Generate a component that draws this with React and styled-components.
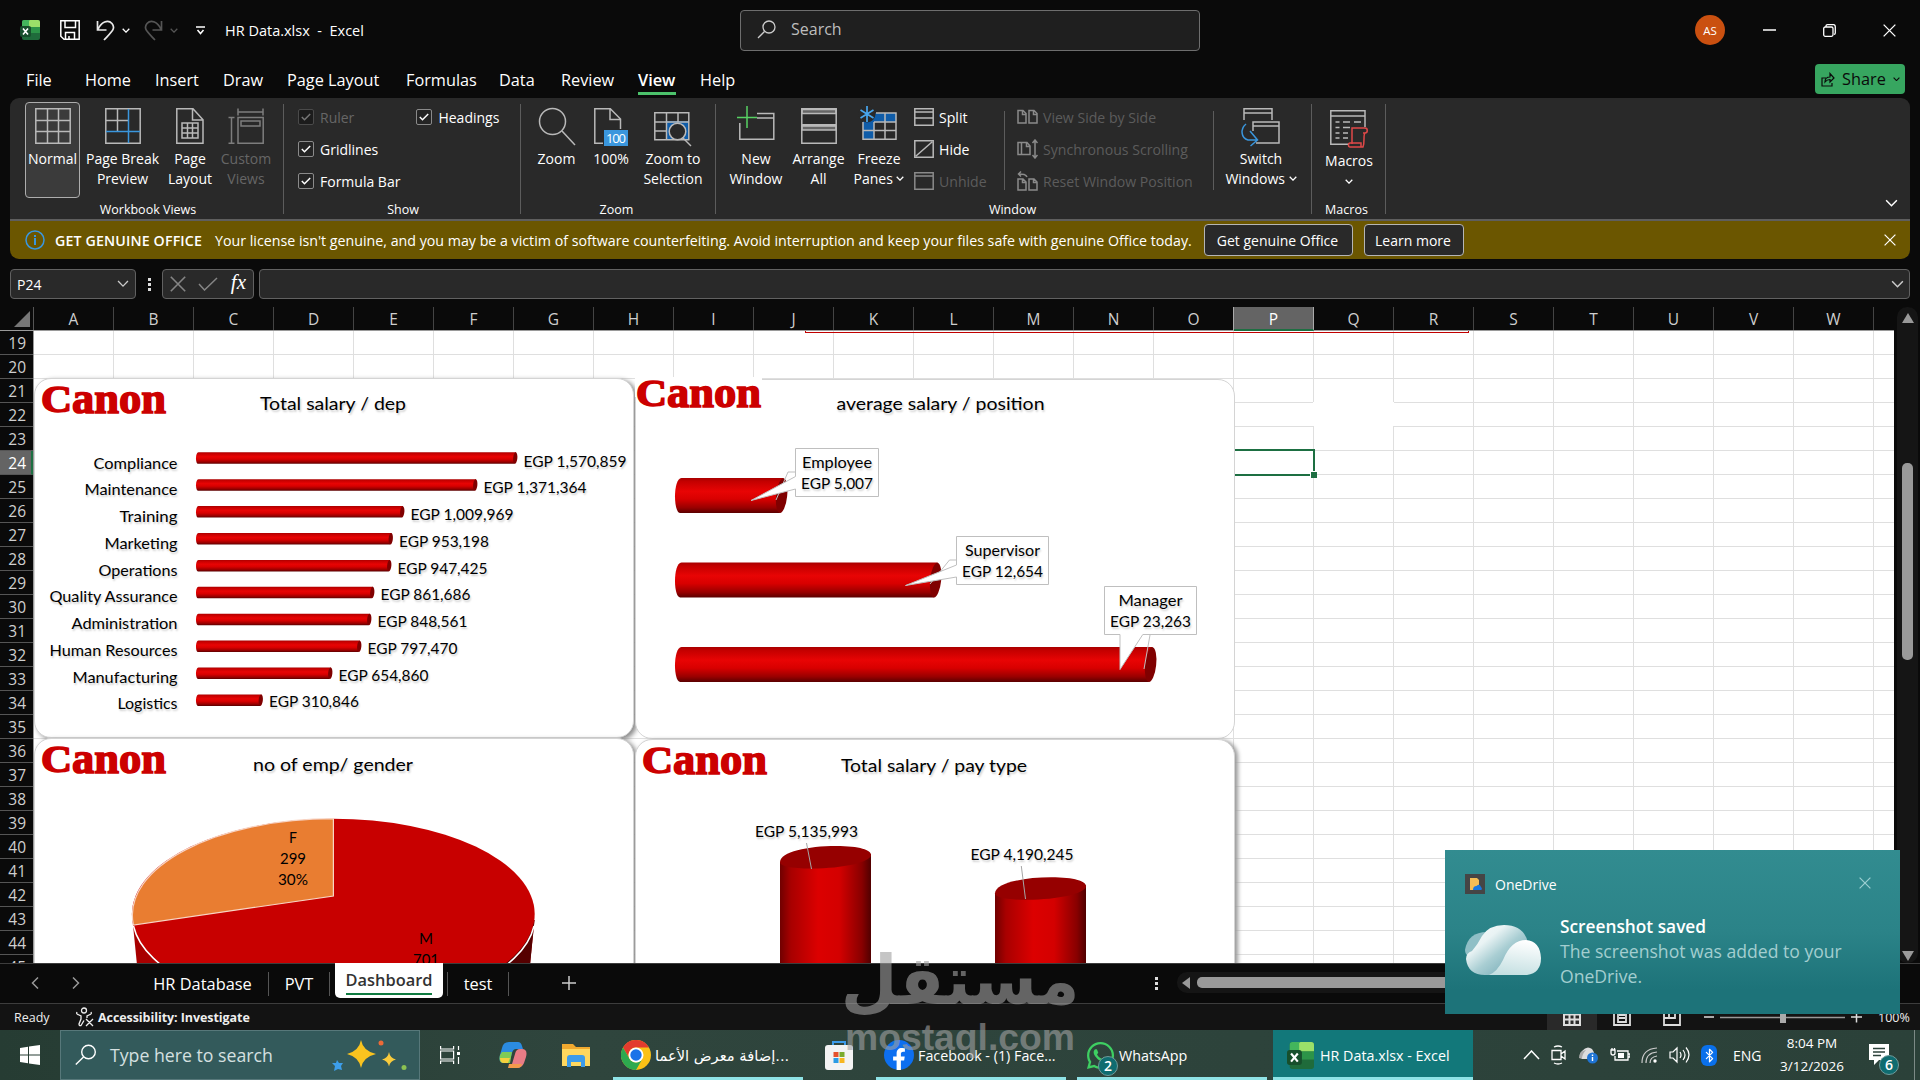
import React from "react";
import styled, { createGlobalStyle, css } from "styled-components";
import { FaWhatsapp, FaFacebookF } from "react-icons/fa";
import { Bluetooth } from "lucide-react";

const COLUMNS = "ABCDEFGHIJKLMNOPQRSTUVW".split("");
const ROWS = Array.from({ length: 27 }, (_, i) => i + 19);
const MENU = [
  ["File", 26, 33],
  ["Home", 46, 24],
  ["Insert", 43, 25],
  ["Draw", 39, 25],
  ["Page Layout", 93, 26],
  ["Formulas", 69, 24],
  ["Data", 36, 26],
  ["Review", 53, 24],
  ["View", 38, 24],
  ["Help", 36, 0],
];

const DEPARTMENTS = [
  ["Compliance", 84, 517.5, "EGP 1,570,859"],
  ["Maintenance", 93, 477.5, "EGP 1,371,364"],
  ["Training", 58, 404.5, "EGP 1,009,969"],
  ["Marketing", 73, 393, "EGP 953,198"],
  ["Operations", 79, 391.5, "EGP 947,425"],
  ["Quality Assurance", 128, 374.5, "EGP 861,686"],
  ["Administration", 106, 371.5, "EGP 848,561"],
  ["Human Resources", 128, 361.5, "EGP 797,470"],
  ["Manufacturing", 105, 332.5, "EGP 654,860"],
  ["Logistics", 60, 263, "EGP 310,846"],
];

const Svg = ({ w, h, children, ...rest }) => (
  <svg width={w} height={h} viewBox={`0 0 ${w} ${h}`} fill="none" stroke="#b9b9b9" strokeWidth="1.5" {...rest}>
    {children}
  </svg>
);

const Chevron = ({ size = 8, color = "#fff" }) => (
  <Svg w={size} h={size * 0.625} viewBox="0 0 8 5" stroke={color} strokeWidth={size > 9 ? 0.9 : 1.3}>
    <path d="M.7.7 4 4.1 7.3.7" />
  </Svg>
);

const Cross = ({ size = 12, color = "#fff" }) => (
  <Svg w={size} h={size} viewBox="0 0 12 12" stroke={color} strokeWidth="1.2">
    <path d="M.6.6l10.8 10.8M11.4.6.6 11.4" />
  </Svg>
);

const ExcelIcon = ({ size = 20 }) => (
  <Svg w={size} h={size} viewBox="0 0 20 20" stroke="none">
    <path d="M4 0h14a2 2 0 0 1 2 2v16a2 2 0 0 1-2 2H4a2 2 0 0 1-2-2V2a2 2 0 0 1 2-2z" fill="#1f6b3b" />
    <path d="M4 0h7v7H2V2a2 2 0 0 1 2-2z" fill="#43b55c" />
    <path d="M10 0h8a2 2 0 0 1 2 2v5H9V1z" fill="#9be069" />
    <path d="M11 7h9v6h-9z" fill="#2c9448" />
    <rect y="6" width="11" height="11" rx="2" fill="#174f2c" />
    <path d="m3 8.5 5 6M8 8.5l-5 6" stroke="#fff" strokeWidth="1.6" />
  </Svg>
);

/* ribbon icons */

const NormalIcon = () => (
  <Svg w={36} h={36}>
    <path d="M.8.8h34.4v34.4H.8zM12.5 1v34M23.5 1v34M1 12.5h34M1 23.5h34" />
  </Svg>
);

const PageBreakIcon = () => (
  <Svg w={36} h={36}>
    <path d="M.8.8h34.4v34.4H.8zM12.5 1v22M1 12.5h22" />
    <path d="M23.5 1v34M1 23.5h34" stroke="#3a96dd" />
  </Svg>
);

const PageLayoutIcon = () => (
  <Svg w={28} h={36}>
    <path d="M.8.8H17l10 11v23.4H.8zM16.5 1v11H27M6 15h16v15H6zM11.5 15v15M16.5 15v15M6 20h16M6 25h16" />
  </Svg>
);

const CustomViewsIcon = () => (
  <Svg w={36} h={36} stroke="#7d7d7d">
    <path d="M10 .5v7M35 .5v7M10 4h25M.5 9.500h6M3.500 10v25M.5 35.200h6M10 9.500h25.200v25.700H10zM13 13h19v5H13z" />
  </Svg>
);

const ZoomIcon = () => (
  <Svg w={38} h={38}>
    <circle cx="14.500" cy="13.500" r="13" />
    <path d="m24 23 13 14" />
  </Svg>
);

const HundredIcon = () => (
  <Svg w={34} h={38}>
    <path d="M9 35.200H.8V.8h15.500L26.500 11v10M16 1v10.500h10.500" />
    <rect x="10" y="22" width="24" height="16" fill="#3a96dd" stroke="none" />
    <text x="22" y="35" fontSize="13" fontFamily="Open Sans" textAnchor="middle" fill="#fff" stroke="none" textLength="20">
      100
    </text>
  </Svg>
);

const ZoomSelectionIcon = () => (
  <Svg w={38} h={38}>
    <rect x="12" y="13" width="23" height="19" fill="#0f5ca8" stroke="none" />
    <path d="M.8 4.800h34v27H.8zM12.500 5v27M24 5v9M1 14h34M1 23h12" />
    <circle cx="23.500" cy="23.500" r="8.300" fill="#292929" />
    <path d="m29 30 8 8" />
  </Svg>
);

const NewWindowIcon = () => (
  <Svg w={38} h={36}>
    <path d="M2.800 15v16.200h34V5.500H20M20 10h17" />
    <path d="M10 -2v22M0 9.500h20" stroke="#57d163" />
  </Svg>
);

const ArrangeIcon = () => (
  <Svg w={36} h={36}>
    <path d="M1 1.500h34v4H1zM1 18h34v4H1z" fill="#666" />
    <path d="M.8.8h34.400v16H.8zM.8 17.500h34.400v17.700H.8z" />
  </Svg>
);

const FreezeIcon = () => (
  <Svg w={38} h={36}>
    <path d="M3 5h33v9H14v17H3z" fill="#0f5ca8" stroke="none" />
    <path d="M3 14v17.200h33V14M14 14v17M25 14v17M3 22.500h33M14 14h22M25 5v9M16 5h20v9" />
    <circle cx="7" cy="6" r="8.500" fill="#292929" stroke="none" />
    <path d="M7-2v16M.5 2l13 8M13.500 2l-13 8" stroke="#48a6ee" strokeWidth="1.700" />
  </Svg>
);

const SwitchIcon = () => (
  <Svg w={40} h={38}>
    <path d="M3 12V.8h28V12M3 5h28M12 23V14h26v21H15M12 18h26" />
    <path d="M5 16c-6 5-5 14 2 16h9M9 23l7.500 9-7 6" stroke="#3a96dd" />
  </Svg>
);

const MacrosIcon = () => (
  <Svg w={38} h={38}>
    <path d="M35 17V.8H.8v33.400H19M1 6h34M5.500 12h4M13 12h7M24 12h7M5.500 17.500h4M13 17.500h7M5.500 23h4M13 23h5M5.500 28h4M13 28h5" />
    <path d="M22 34V18h13c3 0 3 5 0 5h-2M35 23c-2 2 0 9-2 14H20c-2 0-2-4 0-4h11v4" stroke="#e04848" />
  </Svg>
);

const SplitIcon = () => (
  <Svg w={20} h={18}>
    <path d="M.8.8h18.400v16.400H.8zM1 4h18M1 10h18" />
  </Svg>
);

const HideIcon = () => (
  <Svg w={20} h={18}>
    <path d="M.8.8h18.400v16.400H.8zM2 16 18 2" />
  </Svg>
);

const UnhideIcon = () => (
  <Svg w={20} h={18} stroke="#8a8a8a">
    <path d="M.8.8h18.400v16.400H.8zM1 4h18" />
  </Svg>
);

const SideBySideIcon = () => (
  <Svg w={21} h={16} stroke="#8a8a8a">
    <path d="M9 14H1V1.500h5L9 4.500zM5.500 2v3.500H9M12 14V1.500h5l3 3V14zM16.500 2v3.500H20" />
  </Svg>
);

const SyncIcon = () => (
  <Svg w={21} h={20} stroke="#8a8a8a">
    <path d="M4 15.500H1v-12h3M4.500 3.500H10L13 7v8.500H4.500zM9.500 4v3.500H13M18 1v18M15.500 4 18 1l2.500 3M15.500 16l2.500 3 2.500-3" />
  </Svg>
);

const ResetIcon = () => (
  <Svg w={21} h={20} stroke="#8a8a8a">
    <path d="M9 19H1V8h5l3 3zM12 19V8h5l3 3v8zM5.500 8v3.500H9M16.500 8v3.500H20M4 .5 1.500 3 4 5.500M2 3c4 0 7 0 8 3" />
  </Svg>
);

/* charts */

const Fit = ({ w, size = 15, anchor = "middle", children, ...rest }) => (
  <text fontSize={size} textAnchor={anchor} textLength={w} lengthAdjust="spacingAndGlyphs" {...rest}>
    {children}
  </text>
);

const CanonLogo = ({ x, y }) => (
  <g fill="#cc0000" stroke="#cc0000" strokeWidth="1.6" fontFamily="Liberation Serif" fontWeight="700">
    <text x={x - 1} y={y + 25} fontSize="38" textLength="31" lengthAdjust="spacingAndGlyphs">
      C
    </text>
    <text x={x + 30} y={y + 25.500} fontSize="45" textLength="94" lengthAdjust="spacingAndGlyphs">
      anon
    </text>
  </g>
);

const Gradients = () => (
  <defs>
    <linearGradient id="barFill" x1="0" x2="0" y1="0" y2="1">
      <stop offset="0" stopColor="#a80000" />
      <stop offset=".1" stopColor="#c40000" />
      <stop offset=".38" stopColor="#e80404" />
      <stop offset=".6" stopColor="#d80000" />
      <stop offset=".85" stopColor="#980000" />
      <stop offset="1" stopColor="#5a0000" />
    </linearGradient>
    <linearGradient id="columnFill">
      <stop offset="0" stopColor="#700000" />
      <stop offset=".12" stopColor="#a80000" />
      <stop offset=".42" stopColor="#dc0000" />
      <stop offset=".65" stopColor="#d40000" />
      <stop offset=".9" stopColor="#880000" />
      <stop offset="1" stopColor="#500000" />
    </linearGradient>
  </defs>
);

const HBar = ({ x, y, end, h, cap }) => (
  <g>
    <path
      d={`M${x + cap} ${y}H${end - cap * 0.6}V${y + h / 2}L${end - cap * 1.2} ${y + h}H${x + cap * 0.8}C${x - cap * 0.3} ${y + h} ${x - cap * 0.3} ${y} ${x + cap} ${y}z`}
      fill="url(#barFill)"
    />
    <ellipse
      cx={end - cap * 0.9}
      cy={y + h / 2}
      rx={cap * 0.85}
      ry={h / 2}
      fill="#800000"
      transform={`rotate(${cap > 4 ? 6 : 5} ${end - cap} ${y + h / 2})`}
    />
  </g>
);

const DepartmentChart = () => (
  <Card x={0} y={47}>
    <svg viewBox="34 378 600 360">
      <Gradients />
      <CanonLogo x={42} y={387} />
      <Fit x={333} y={410} w={146} size={18}>
        Total salary / dep
      </Fit>
      {DEPARTMENTS.map(([name, w, end, value], i) => {
        const y = 452.3 + i * 26.9;
        const base = 467 + i * 26.75;
        return (
          <g key={name}>
            <Fit x={177.5} y={base + 1.7} w={w} anchor="end">
              {name}
            </Fit>
            <HBar x={196} y={y} end={end} h={11.500} cap={2.500} />
            <Fit x={end + 6} y={base - 0.3} w={i < 3 ? 103 : 90} anchor="start">
              {value}
            </Fit>
          </g>
        );
      })}
    </svg>
  </Card>
);

const PositionChart = () => (
  <Card x={601} y={48} $light>
    <svg viewBox="635 379 600 360">
      <path d="M635 377h127v20H635z" fill="#fff" />
      <CanonLogo x={637} y={381} />
      <Fit x={940.500} y={410} w={208} size={18}>
        average salary / position
      </Fit>
      <HBar x={675} y={478} end={787.5} h={35} cap={6.500} />
      <HBar x={675} y={562.500} end={941.5} h={35} cap={6.500} />
      <HBar x={675} y={647} end={1156.5} h={35} cap={6.500} />
      <g fill="#fff" stroke="#bfbfbf">
        <path d="M795.500 472H788l-12 28M956.500 560H949.500L930 584M1150 635l-6 34" fill="none" />
        <path d="M795.500 448.500h83v48h-83V489L751 500.500l44.500-24z" />
        <path d="M956.500 536.500h92v48h-92V577l-51 8.500 51-20.500z" />
        <path d="M1104.500 586.500h92v48h-53.700L1120 669.500v-35h-15.500z" />
      </g>
      <Fit x={837} y={467.500} w={70}>Employee</Fit>
      <Fit x={837} y={489} w={72}>EGP 5,007</Fit>
      <Fit x={1002.500} y={555.500} w={75}>Supervisor</Fit>
      <Fit x={1002.500} y={577} w={81}>EGP 12,654</Fit>
      <Fit x={1150.500} y={605.500} w={64}>Manager</Fit>
      <Fit x={1150.500} y={627} w={81}>EGP 23,263</Fit>
    </svg>
  </Card>
);

const GenderChart = () => (
  <Card x={0} y={407}>
    <svg viewBox="34 738 600 360">
      <CanonLogo x={42} y={747} />
      <Fit x={333} y={770.5} w={160} size={18}>
        no of emp/ gender
      </Fit>
      <path d="M132.500 920l5 50h392l5-50z" fill="#a80000" />
      <path d="M500 920h34.500l-5 50H500z" fill="#560000" />
      <ellipse cx="333.300" cy="914" rx="201.400" ry="95.300" fill="#c80000" />
      <path d="M133.400 925c-12-58 83-106.300 200-106.300V896z" fill="#e97d31" stroke="#f8d5c4" strokeWidth="1.200" />
      <path d="M133.500 926A201.400 95.300 0 0 0 534 926" fill="none" stroke="#fff" strokeWidth="1.500" />
      <PlainText>
        <Fit x={293} y={842.500} w={8}>F</Fit>
        <Fit x={293} y={864} w={26}>299</Fit>
        <Fit x={293} y={885} w={30}>30%</Fit>
        <Fit x={426} y={944} w={14}>M</Fit>
        <Fit x={426} y={965} w={26}>701</Fit>
      </PlainText>
    </svg>
  </Card>
);

const Cylinder = ({ dx, dy }) => (
  <g transform={`translate(${dx} ${dy})`}>
    <path d="M780 862v150h91V854z" fill="url(#columnFill)" />
    <path d="M780 862C780 852 808 846 836 846C860 846 871 850 871 855C871 862 843 868.500 812 868.500C790 868.500 780 866 780 862z" fill="#960000" />
  </g>
);

const PayTypeChart = () => (
  <Card x={601} y={408} $strong>
    <svg viewBox="635 739 600 360">
      <CanonLogo x={643} y={748} />
      <Fit x={934} y={771.5} w={186} size={18}>
        Total salary / pay type
      </Fit>
      <Cylinder dx={0} dy={0} />
      <Cylinder dx={215} dy={31.300} />
      <path d="M806.500 843l5 26M1021.300 866l4.200 33" stroke="#a6a6a6" />
      <Fit x={806.500} y={837} w={103}>EGP 5,135,993</Fit>
      <Fit x={1022} y={860} w={103}>EGP 4,190,245</Fit>
    </svg>
  </Card>
);

/* page parts */

const TitleRow = () => (
  <TitleBar>
    <ExcelIcon />
    <SaveSlot>
      <Svg w={20} h={20} stroke="#fff">
        <path d="M.8.8h18.400v18.400H4l-3.200-3zM5 1v6.500h10.500V1M5.500 19v-6.500h9V19M9 19v-3" />
      </Svg>
    </SaveSlot>
    <Svg w={19} h={21} stroke="#e8e8e8" strokeWidth="1.700">
      <path d="M1.500 1v9h9M2 9.500C5 2 12-1 16 3.500c4 5 0 8-8 16.500" />
    </Svg>
    <Chevron />
    <RedoSlot>
      <Svg w={19} h={21} stroke="#555" strokeWidth="1.700">
        <path d="M17.500 1v9h-9M17 9.500C14 2 7-1 3 3.500c-4 5 0 8 8 16.500" />
      </Svg>
      <Chevron color="#555" />
    </RedoSlot>
    <Svg w={9} h={9} stroke="#fff">
      <path d="M0 1h9M1.500 4 4.500 7.500 7.500 4" />
    </Svg>
    <DocTitle>{"HR Data.xlsx  -  Excel"}</DocTitle>
    <SearchBox>
      <Svg w={19} h={19} stroke="#ccc" strokeWidth="1.300">
        <circle cx="12" cy="7" r="6" />
        <path d="M7.500 11.500 1 18" />
      </Svg>
      Search
    </SearchBox>
    <Avatar>AS</Avatar>
    <WindowButtons>
      <Svg w={13} h={2} stroke="#fff">
        <path d="M0 1h13" />
      </Svg>
      <Svg w={13} h={13} stroke="#fff" strokeWidth="1.300">
        <path d="M3 3V2Q3 .7 4.500.7h6Q12.300.7 12.300 3v6q0 1.300-1.300 1.300" />
        <rect x=".7" y="3" width="9.300" height="9.300" rx="1.500" />
      </Svg>
      <Cross size={13} />
    </WindowButtons>
  </TitleBar>
);

const RibbonButton = ({ icon, lines, w, arrow, ...rest }) => (
  <BigButton $w={w} {...rest}>
    <IconBox>{icon}</IconBox>
    {lines.map((line, i) => (
      <span key={line}>
        {line}
        {arrow && i === lines.length - 1 && (
          <>
            {" "}
            <Chevron />
          </>
        )}
      </span>
    ))}
  </BigButton>
);

const Check = ({ label, $off }) => (
  <CheckLabel $off={$off}>
    <CheckBox $off={$off}>
      <Svg w={10} h={8} stroke={$off ? "#777" : "#fff"}>
        <path d="M.8 4 3.500 6.700 9.200 1" />
      </Svg>
    </CheckBox>
    {label}
  </CheckLabel>
);

const Ribbon = () => (
  <RibbonPanel>
    <Group $w={274} $pad={15}>
      <Body $gap={4}>
        <RibbonButton $active w={55} icon={<NormalIcon />} lines={["Normal"]} />
        <RibbonButton w={77} icon={<PageBreakIcon />} lines={["Page Break", "Preview"]} />
        <RibbonButton w={50} icon={<PageLayoutIcon />} lines={["Page", "Layout"]} />
        <RibbonButton $off w={54} icon={<CustomViewsIcon />} lines={["Custom", "Views"]} />
      </Body>
      <GroupName>Workbook Views</GroupName>
    </Group>
    <Group $w={237} $pad={14}>
      <Body $gap={44}>
        <CheckColumn>
          <Check label="Ruler" $off />
          <Check label="Gridlines" />
          <Check label="Formula Bar" />
        </CheckColumn>
        <CheckColumn>
          <NudgeLeft>
            <Check label="Headings" />
          </NudgeLeft>
        </CheckColumn>
      </Body>
      <GroupName>Show</GroupName>
    </Group>
    <Group $w={195} $pad={9}>
      <Body $gap={3}>
        <RibbonButton w={53} icon={<ZoomIcon />} lines={["Zoom"]} />
        <RibbonButton w={50} icon={<HundredIcon />} lines={["100%"]} />
        <RibbonButton w={68} icon={<ZoomSelectionIcon />} lines={["Zoom to", "Selection"]} />
      </Body>
      <GroupName>Zoom</GroupName>
    </Group>
    <Group $w={596} $pad={10}>
      <Body $gap={3}>
        <RibbonButton w={60} icon={<NewWindowIcon />} lines={["New", "Window"]} />
        <RibbonButton w={59} icon={<ArrangeIcon />} lines={["Arrange", "All"]} />
        <RibbonButton arrow w={56} icon={<FreezeIcon />} lines={["Freeze", "Panes"]} />
        <ItemColumn $w={95}>
          <Item><SplitIcon />Split</Item>
          <Item><HideIcon />Hide</Item>
          <Item $off><UnhideIcon />Unhide</Item>
        </ItemColumn>
        <ItemColumn $w={209} $line>
          <Item $off><SideBySideIcon />View Side by Side</Item>
          <Item $off><SyncIcon />Synchronous Scrolling</Item>
          <Item $off><ResetIcon />Reset Window Position</Item>
        </ItemColumn>
        <ItemColumn $w={85} $line $tight>
          <RibbonButton arrow w={80} icon={<SwitchIcon />} lines={["Switch", "Windows"]} />
        </ItemColumn>
      </Body>
      <GroupName>Window</GroupName>
    </Group>
    <Group $w={74} $pad={8}>
      <Body>
        <RibbonButton $low w={58} icon={<MacrosIcon />} lines={["Macros"]} />
      </Body>
      <MacroArrow>
        <Chevron />
      </MacroArrow>
      <GroupName>Macros</GroupName>
    </Group>
    <Collapse>
      <Chevron size={13} />
    </Collapse>
  </RibbonPanel>
);

const Banner = () => (
  <Notice>
    <Svg w={20} h={20} stroke="#3a96dd">
      <circle cx="10" cy="10" r="9" />
      <path d="M10 8v7M10 5v2" strokeWidth="2" />
    </Svg>
    <strong>GET GENUINE OFFICE</strong>
    <p>
      Your license isn't genuine, and you may be a victim of software counterfeiting. Avoid interruption and keep your
      files safe with genuine Office today.
    </p>
    <NoticeButton $w={149}>Get genuine Office</NoticeButton>
    <NoticeButton $w={100}>Learn more</NoticeButton>
    <Cross />
  </Notice>
);

const FormulaBar = () => (
  <FormulaRow>
    <NameBox>
      P24 <Chevron size={12} color="#ccc" />
    </NameBox>
    <Dots />
    <FxBox>
      <Cross size={16} color="#858585" />
      <Svg w={20} h={14} stroke="#858585">
        <path d="m1 7 5.500 6L19 1" />
      </Svg>
      <i>fx</i>
    </FxBox>
    <FormulaInput>
      <Chevron size={13} color="#ccc" />
    </FormulaInput>
  </FormulaRow>
);

const Sheet = () => (
  <SheetArea>
    <HeaderRow>
      <Corner>
        <Svg w={16} h={16} stroke="none">
          <path d="M16 0v16H0z" fill="#777" />
        </Svg>
      </Corner>
      {COLUMNS.map((c) => (
        <ColumnHead key={c} $on={c === "P"}>
          {c}
        </ColumnHead>
      ))}
    </HeaderRow>
    <SheetBody>
      <RowHeads>
        {ROWS.map((r) => (
          <RowHead key={r} $on={r === 24}>
            {r}
          </RowHead>
        ))}
      </RowHeads>
      <Cells>
        <Blank />
        <RedEdge />
        <Selection />
        <DepartmentChart />
        <PositionChart />
        <GenderChart />
        <PayTypeChart />
      </Cells>
      <VScroll>
        <Svg w={12} h={10} stroke="none">
          <path d="M6 0l6 10H0z" fill="#999" />
        </Svg>
        <VThumb />
        <Svg w={12} h={10} stroke="none">
          <path d="M6 10l6-10H0z" fill="#999" />
        </Svg>
      </VScroll>
    </SheetBody>
  </SheetArea>
);

const Tabs = () => (
  <TabBar>
    <TabArrows>
      <Svg w={8} h={12} stroke="#999">
        <path d="M7 .5 1.500 6 7 11.500" />
      </Svg>
      <Svg w={8} h={12} stroke="#999">
        <path d="M1 .5 6.500 6 1 11.500" />
      </Svg>
    </TabArrows>
    <Tab $w={132}>HR Database</Tab>
    <Tab $w={61}>PVT</Tab>
    <ActiveTab>
      <span>Dashboard</span>
    </ActiveTab>
    <Tab $w={62} $first>test</Tab>
    <AddTab>
      <Svg w={14} h={14} stroke="#ccc">
        <path d="M7 0v14M0 7h14" />
      </Svg>
    </AddTab>
    <Dots />
    <HScroll>
      <Svg w={8} h={12} stroke="none">
        <path d="M0 6l8-6v12z" fill="#999" />
      </Svg>
      <HThumb />
    </HScroll>
  </TabBar>
);

const Status = () => (
  <StatusBar>
    <span>Ready</span>
    <Svg w={19} h={20} stroke="#eee" strokeWidth="1.300">
      <circle cx="8" cy="3.500" r="2.500" />
      <path d="M1 5q-1 2 1 2.500l3 1.500v3l-2 5q0 2 2 1.500l3-5M15 5q1 2-1 2.500L11 9v2M10 12l7 7M17 12l-7 7" />
    </Svg>
    <b>Accessibility: Investigate</b>
    <ViewButtons>
      <ViewButton $on>
        <Svg w={18} h={18} stroke="#ddd" strokeWidth="2">
          <path d="M1 1h16v16H1zM6.500 1v16M11.500 1v16M1 6.500h16M1 11.500h16" />
        </Svg>
      </ViewButton>
      <ViewButton>
        <Svg w={18} h={18} stroke="#ddd" strokeWidth="1.800">
          <path d="M1 1h16v16H1zM5 4h8v10H5zM6 7h6M6 10h6" />
        </Svg>
      </ViewButton>
      <ViewButton>
        <Svg w={18} h={18} stroke="#ddd" strokeWidth="1.800">
          <path d="M1 1h16v16H1zM1 10h11V1M6 1v9" />
        </Svg>
      </ViewButton>
    </ViewButtons>
    <Svg w={158} h={14} stroke="#ddd">
      <path d="M0 7h10M147 7h11M152.500 1.500v11" />
      <path d="M16 7.500h125" stroke="#999" />
      <path d="M76 2h6v11h-6z" fill="#aaa" stroke="none" />
    </Svg>
    <Percent>100%</Percent>
  </StatusBar>
);

const ChromeIcon = () => (
  <Svg w={30} h={30} stroke="none">
    <circle cx="15" cy="15" r="15" fill="#fbc116" />
    <path d="M2 7.500A15 15 0 0 1 28 7.500H15A7.500 7.500 0 0 0 8.500 18.800z" fill="#e33b2e" />
    <path d="M2 7.500A15 15 0 0 0 15 30l6.500-11.200A7.500 7.500 0 0 1 8.500 18.800z" fill="#2da94f" />
    <circle cx="15" cy="15" r="7.500" fill="#fff" />
    <circle cx="15" cy="15" r="5.700" fill="#1a73e8" />
  </Svg>
);

const Taskbar = () => (
  <TaskRow>
    <StartButton>
      <Svg w={20} h={20} stroke="none" fill="#fff">
        <path d="M0 3l8-1.200v7.700H0zM9 1.600 20 0v9.500H9zM0 10.500h8v7.700L0 17zM9 10.500h11V20L9 18.400z" />
      </Svg>
    </StartButton>
    <TaskSearch>
      <Svg w={22} h={22} stroke="#fff" strokeWidth="1.400">
        <circle cx="13.500" cy="8" r="6.800" />
        <path d="M8.500 13 .8 20.500" />
      </Svg>
      <span>Type here to search</span>
      <Svg w={78} h={34} stroke="none">
        <path d="M31 2q2 11 15 14-13 3-15 14-2-11-14-14 12-3 14-14z" fill="#f9c31f" />
        <path d="M59 14q1 6 7 7.500-6 1.500-7 7-1-5.500-7-7 6-1.500 7-7.500z" fill="#f9cb3c" />
        <path d="M7 22l2 3 4 0-2 3 1 4-4-1-4 2 1-5-3-3 4 0z" fill="#3d9eea" />
        <circle cx="51" cy="5" r="2.500" fill="#ec6a37" />
        <circle cx="74" cy="29.500" r="2.500" fill="#8cc152" />
      </Svg>
    </TaskSearch>
    <Pinned $w={59}>
      <Svg w={20} h={20} stroke="#fff" strokeWidth="1.200">
        <path d="M.6 1v3h13V1M.6 19v-3h13v3M.6 6h13v8H.6zM18.500 1v4M18.500 12v7" />
        <path d="M17 7h3v3h-3z" fill="#fff" stroke="none" />
      </Svg>
    </Pinned>
    <Pinned $w={68}>
      <Svg w={28} h={26} stroke="none">
        <path d="M10 0h9q3 0 4 4l1 3h-7q-3 0-4 4l-3 10H5q-6 0-4-8l2-7q1-6 7-6z" fill="#2b8be0" />
        <path d="M3 10h10l-2 11H5q-6 0-4-8z" fill="#7fca55" />
        <path d="M1 16h10l-2 5H5q-4 0-4-5z" fill="#f5cf3d" />
        <path d="M18 26H9q3 0 4-4l3-10q1-5 5-5h2q6 0 4 8l-2 6q-2 5-7 5z" fill="#e87c86" />
        <path d="M10 22h13q-1 4-5 4H9z" fill="#f29a4b" />
      </Svg>
    </Pinned>
    <Pinned $w={58}>
      <Svg w={28} h={24} stroke="none">
        <path d="M0 1h11l3 3h14v19H0z" fill="#f0a92f" />
        <path d="M0 6h28v17H0z" fill="#ffd75e" />
        <path d="M5 24v-9q0-3 3-3h12q3 0 3 3v9h-4v-5H9v5z" fill="#3d9be9" />
      </Svg>
    </Pinned>
    <Running $w={190} $before={8}>
      <ChromeIcon />
      <ArabicTitle>إضافة معرض الأعما...</ArabicTitle>
    </Running>
    <Pinned $w={71}>
      <Svg w={30} h={30} stroke="none">
        <path d="M9 6V2h12v4" stroke="#3d9be9" strokeWidth="2" fill="none" />
        <rect x="1" y="5" width="28" height="25" rx="3" fill="#f3f3f3" />
        <path d="M9.500 12h5v5h-5z" fill="#e5512c" />
        <path d="M15.500 12h5v5h-5z" fill="#7aab2d" />
        <path d="M9.500 18h5v5h-5z" fill="#2b9be4" />
        <path d="M15.500 18h5v5h-5z" fill="#f7b620" />
      </Svg>
    </Pinned>
    <Running $w={190} $before={2}>
      <FacebookBadge>
        <FaFacebookF size={22} />
      </FacebookBadge>
      <span>Facebook - (1) Face...</span>
    </Running>
    <Running $w={190} $gap={11} $before={11}>
      <WhatsAppSlot>
        <FaWhatsapp size={31} color="#3ecf62" />
        <CountBadge>2</CountBadge>
      </WhatsAppSlot>
      <span>WhatsApp</span>
    </Running>
    <Running $w={200} $gap={6} $before={6} $active>
      <ExcelIcon size={27} />
      <span>HR Data.xlsx - Excel</span>
    </Running>
    <Tray>
      <Svg w={17} h={10} stroke="#fff">
        <path d="M1 9l7.500-8L16 9" />
      </Svg>
      <Svg w={16} h={20} stroke="#fff" strokeWidth="1.300">
        <path d="M1 5.500h9v9H1zM10 9l4-3v8l-4-3M3 2q4-2 8 0M3 18q4 2 8 0" />
      </Svg>
      <Svg w={21} h={18} stroke="none">
        <path d="M4 13a5 5 0 0 1 0-8Q9-1 14 3q3 3 2 10z" fill="#ddd" />
        <path d="M1 12Q1 5 8 4q-4 4-4 9z" fill="#aaa" />
        <circle cx="14.500" cy="12" r="5.500" fill="#1f74d4" />
        <path d="M14.500 11v4M14.500 8.500v1.500" stroke="#fff" strokeWidth="1.400" />
      </Svg>
      <Svg w={20} h={14} stroke="#fff" strokeWidth="1.300">
        <path d="M7 3h11v9H5V8M1 2v3q0 2 2 2t2-2V2zM2 0v2M4.500 0v2M18 6h2v3h-2" />
        <path d="M8 5h6v5H8z" fill="#fff" stroke="none" />
      </Svg>
      <Svg w={17} h={17} stroke="#ccc" strokeWidth="1.200">
        <path d="M1 16Q1 2 16 1M5 16Q5 6 16 5M9 16q0-6 7-7" />
        <circle cx="14" cy="14" r="1.700" fill="#fff" stroke="none" />
      </Svg>
      <Svg w={21} h={18} stroke="#fff" strokeWidth="1.200">
        <path d="M1 6h3l4-4v14l-4-4H1zM11 6q2 3 0 6M14 4q4 5 0 10M17 1.500q6 7 0 15" />
      </Svg>
      <BlueTooth>
        <Bluetooth size={15} strokeWidth={2} />
      </BlueTooth>
      <Lang>ENG</Lang>
      <Clock>
        <span>8:04 PM</span>
        <span>3/12/2026</span>
      </Clock>
      <Alerts>
        <Svg w={20} h={22} stroke="none">
          <path d="M0 0h20v16H10l-5 5v-5H0z" fill="#fff" />
          <path d="M4 4.500h12M4 8h12M4 11.500h8" stroke="#2c423b" strokeWidth="1.300" />
        </Svg>
        <CountBadge $big>6</CountBadge>
      </Alerts>
      <DesktopEdge />
    </Tray>
  </TaskRow>
);

const Toast = () => (
  <ToastBox>
    <ToastHead>
      <Svg w={20} h={20} stroke="none">
        <path d="M0 0h20v20H0z" fill="#454545" />
        <path d="M5 4h7l2 2v10H5z" fill="#f5bd55" />
        <path d="M8 16q0-4 3.500-4 3-3 4.500 1 1.500 1 .5 3z" fill="#1877e0" />
      </Svg>
      OneDrive
      <Cross size={12} color="#9ccfd1" />
    </ToastHead>
    <ToastBody>
      <Svg w={76} h={60} viewBox="0 0 76 50" preserveAspectRatio="none" stroke="none">
        <defs>
          <linearGradient id="cloudA" x1="0" y1="0" x2=".9" y2=".9">
            <stop offset="0" stopColor="#fafcfc" />
            <stop offset=".35" stopColor="#e9f3f4" />
            <stop offset=".6" stopColor="#a9ced3" />
            <stop offset="1" stopColor="#6ea6b2" />
          </linearGradient>
          <linearGradient id="cloudB" x1=".6" y1="0" x2=".4" y2="1">
            <stop offset="0" stopColor="#fff" />
            <stop offset="1" stopColor="#c5e0e2" />
          </linearGradient>
        </defs>
        <path d="M22 7Q3 7 0 25q0 5 4 6l20-18z" fill="#8fbfc6" />
        <path d="M20 50Q3 50 1 34q0-6 6-8 6-7 10-15Q24 0 39 0q20 0 24 18L35 50z" fill="url(#cloudA)" />
        <path d="M24 50q8-3 14-15 8-20 23-20 14 1 15 18 0 15-14 17z" fill="url(#cloudB)" />
      </Svg>
      <div>
        <strong>Screenshot saved</strong>
        <p>The screenshot was added to your OneDrive.</p>
      </div>
    </ToastBody>
  </ToastBox>
);

export default function App() {
  return (
    <>
      <GlobalStyle />
      <Window>
        <TitleRow />
        <MenuBar>
          {MENU.map(([name, w, gap]) => (
            <MenuItem key={name} $w={w} $gap={gap} $on={name === "View"}>
              {name}
            </MenuItem>
          ))}
          <Share>
            <Svg w={14} h={15} stroke="#0a0a0a" strokeWidth="1.200">
              <path d="M5 6H1v8h10v-3M4 10q0-5 5-5V1.500l4 4.500-4 4V7.500Q6 7.500 4 10z" />
            </Svg>
            Share <Chevron size={7} color="#0a0a0a" />
          </Share>
        </MenuBar>
        <Ribbon />
        <Banner />
        <FormulaBar />
        <Sheet />
        <Tabs />
        <Status />
        <Taskbar />
        <Toast />
        <Watermark>
          <svg width="240" height="116" viewBox="0 0 240 116">
            <text transform="translate(120 58) scale(1.02 1.06)" fontSize="64" textAnchor="middle" fontFamily="DejaVu Sans" fontWeight="700">
              مستقل
            </text>
            <text x="120" y="104" fontSize="36" textAnchor="middle" textLength="230" lengthAdjust="spacingAndGlyphs" fontFamily="Liberation Sans" fontWeight="700">
              mostaql.com
            </text>
          </svg>
        </Watermark>
      </Window>
    </>
  );
}

const GlobalStyle = createGlobalStyle`
  * {
    box-sizing: border-box;
  }

  body {
    margin: 0;
    overflow: hidden;
    background: #0a0a0a;
    font-family: "Open Sans", "Noto Sans", sans-serif;
  }

  svg {
    flex: none;
  }
`;

const Window = styled.div`
  position: relative;
  width: 1920px;
  height: 1080px;
  display: flex;
  flex-direction: column;
  overflow: hidden;
  color: #fff;
  font-size: 14px;
`;

const TitleBar = styled.header`
  height: 60px;
  display: flex;
  align-items: center;
  padding-left: 20px;

  > svg:nth-of-type(2) {
    margin-right: 7px;
  }
`;

const SaveSlot = styled.div`
  display: flex;
  margin: 0 16px 0 20px;
`;

const RedoSlot = styled.div`
  display: flex;
  align-items: center;
  gap: 7px;
  margin: 0 18px 0 14px;
`;

const DocTitle = styled.span`
  width: 535px;
  padding-left: 20px;
  font-size: 14.5px;
  white-space: pre;
`;

const SearchBox = styled.div`
  width: 460px;
  height: 41px;
  display: flex;
  align-items: center;
  gap: 15px;
  padding: 0 0 2px 16px;
  border: 1px solid #6e6e6e;
  border-radius: 4px;
  background: #1f1f1f;
  color: #bdbdbd;
  font-size: 16px;
`;

const Avatar = styled.div`
  width: 30px;
  height: 30px;
  margin-left: 495px;
  border-radius: 50%;
  background: #ca5010;
  font-size: 11.5px;
  line-height: 31px;
  text-align: center;
`;

const WindowButtons = styled.div`
  display: flex;
  align-items: center;
  gap: 47px;
  margin-left: 38px;
`;

const MenuBar = styled.nav`
  height: 38px;
  display: flex;
  padding-left: 26px;
  font-size: 16.3px;
`;

const MenuItem = styled.span`
  width: ${({ $w }) => $w}px;
  height: 35px;
  margin-right: ${({ $gap }) => $gap}px;
  line-height: 40px;
  white-space: nowrap;

  ${({ $on }) =>
    $on &&
    css`
      border-bottom: 3px solid #4cc26b;
      font-weight: 600;
    `}
`;

const Share = styled.div`
  width: 90px;
  height: 30px;
  display: flex;
  align-items: center;
  justify-content: space-between;
  margin: 4px 15px 0 auto;
  padding: 0 5px 0 6px;
  border-radius: 4px;
  background: #37a660;
  color: #0a0a0a;
`;

const RibbonPanel = styled.section`
  height: 123px;
  display: flex;
  margin: 0 10px;
  border-bottom: 2px solid #5e5e5e;
  border-radius: 9px 9px 0 0;
  background: #292929;
`;

const Group = styled.div`
  width: ${({ $w }) => $w}px;
  height: 110px;
  display: flex;
  flex-direction: column;
  margin-top: 6px;
  padding-left: ${({ $pad }) => $pad}px;
  border-right: 1px solid #5c5c5c;
`;

const Body = styled.div`
  height: 94px;
  display: flex;
  gap: ${({ $gap = 0 }) => $gap}px;
  margin-top: -2px;
`;

const GroupName = styled.div`
  margin: auto 0 -5px;
  padding-right: 12px;
  font-size: 12.5px;
  line-height: 18px;
  text-align: center;
`;

const BigButton = styled.div`
  width: ${({ $w }) => $w}px;
  height: 96px;
  flex: none;
  display: flex;
  flex-direction: column;
  align-items: center;
  padding-top: ${({ $low }) => ($low ? 7 : 5)}px;
  border: 1px solid ${({ $active }) => ($active ? "#adadad" : "transparent")};
  border-radius: 4px;
  background: ${({ $active }) => ($active ? "#3b3b3b" : "none")};
  color: ${({ $off }) => ($off ? "#666" : "#fff")};
  line-height: 20px;
  white-space: nowrap;

  > span > svg {
    margin-bottom: 3px;
  }
`;

const IconBox = styled.div`
  height: 41px;

  svg {
    display: block;
    overflow: visible;
  }
`;

const CheckColumn = styled.div`
  display: flex;
  flex-direction: column;
  gap: 16px;
  padding-top: 7px;
`;

const NudgeLeft = styled.div`
  margin-left: -28px;
`;

const CheckLabel = styled.label`
  height: 16px;
  display: flex;
  align-items: center;
  gap: 6px;
  color: ${({ $off }) => ($off ? "#666" : "#fff")};
  white-space: nowrap;
`;

const CheckBox = styled.span`
  width: 16px;
  height: 16px;
  display: grid;
  place-items: center;
  border: 1px solid ${({ $off }) => ($off ? "#4a4a4a" : "#8a8a8a")};
  border-radius: 2px;
  background: ${({ $off }) => ($off ? "#1c1c1c" : "#242424")};
`;

const ItemColumn = styled.div`
  width: ${({ $w }) => $w}px;
  height: 96px;
  flex: none;
  display: flex;
  flex-direction: column;
  gap: 12px;
  margin-left: -1px;
  padding: ${({ $tight }) => ($tight ? "0" : "5px 0 0 5px")};

  ${({ $line, $tight }) =>
    $line &&
    css`
      margin-left: -3px;
      padding-left: ${$tight ? 8 : 13}px;
      background: linear-gradient(#5c5c5c, #5c5c5c) 0 9px / 1px 79px no-repeat;
    `}
`;

const Item = styled.div`
  height: 20px;
  display: flex;
  align-items: center;
  gap: 5px;
  color: ${({ $off }) => ($off ? "#5c5c5c" : "#fff")};
  font-size: 14.1px;
  white-space: nowrap;
`;

const MacroArrow = styled.div`
  height: 5px;
  margin: -20px 0 0 25px;
  line-height: 5px;
`;

const Collapse = styled.div`
  margin: auto 12px 8px auto;
`;

const Notice = styled.section`
  height: 38px;
  display: flex;
  align-items: center;
  margin: 0 10px;
  padding: 0 14px 0 15px;
  border-radius: 0 0 9px 9px;
  background: #6b5600;

  > strong {
    width: 160px;
    margin-left: 10px;
    font-weight: 600;
    font-size: 14.2px;
    letter-spacing: 0.15px;
    white-space: nowrap;
  }

  > p {
    width: 989px;
    margin: 0;
    font-size: 14.22px;
    white-space: nowrap;
  }

  > svg:last-child {
    margin-left: auto;
  }
`;

const NoticeButton = styled.div`
  width: ${({ $w }) => $w}px;
  height: 32px;
  margin-right: 11px;
  padding-right: 2px;
  border: 1px solid #b5b5b5;
  border-radius: 4px;
  background: #292929;
  line-height: 31px;
  text-align: center;
`;

const FormulaRow = styled.section`
  height: 48px;
  display: flex;
  align-items: center;
  padding: 2px 10px 0;
`;

const boxed = css`
  height: 30px;
  display: flex;
  align-items: center;
  border: 1px solid #616161;
  border-radius: 4px;
  background: #292929;
`;

const NameBox = styled.div`
  ${boxed}
  width: 126px;
  justify-content: space-between;
  padding: 0 6px;
  font-size: 14px;
`;

const Dots = styled.div`
  width: 3px;
  height: 13px;
  margin: 0 11px 0 12px;
  background: repeating-linear-gradient(#ddd 0 3px, transparent 3px 5px);
`;

const FxBox = styled.div`
  ${boxed}
  width: 92px;
  justify-content: space-between;
  padding: 0 7px 0 7px;

  > i {
    padding-bottom: 3px;
    font-family: "Liberation Serif", serif;
    font-size: 21px;
  }
`;

const FormulaInput = styled.div`
  ${boxed}
  flex: 1;
  justify-content: flex-end;
  margin-left: 5px;
  padding: 0 5px;
`;

const SheetArea = styled.main`
  height: 656px;
  display: flex;
  flex-direction: column;
`;

const HeaderRow = styled.div`
  height: 24px;
  display: flex;
  width: 1894px;
  border-bottom: 1px solid #9a9a9a;
`;

const Corner = styled.div`
  width: 34px;
  padding: 4px 0 0 14px;
  border-right: 1px solid #555;
`;

const ColumnHead = styled.div`
  width: 80px;
  border-right: 1px solid #444;
  color: #cfcfcf;
  font-size: 15.5px;
  line-height: 24px;
  text-align: center;

  ${({ $on }) =>
    $on &&
    css`
      height: 24px;
      border-right-color: #aaa;
      border-bottom: 2px solid #1d6f42;
      background: #646464;
      box-shadow: -1px 0 #aaa;
      color: #fff;
    `}
`;

const SheetBody = styled.div`
  height: 632px;
  display: flex;
`;

const RowHeads = styled.div`
  width: 34px;
  border-right: 1px solid #9a9a9a;
  overflow: hidden;
`;

const RowHead = styled.div`
  height: 24px;
  padding-right: 7px;
  border-bottom: 1px solid #555;
  color: #cfcfcf;
  font-size: 15.5px;
  line-height: 25px;
  text-align: right;

  ${({ $on }) =>
    $on &&
    css`
      border-right: 2px solid #1d6f42;
      padding-right: 5px;
      background: #646464;
      color: #fff;
    `}
`;

const Cells = styled.div`
  position: relative;
  width: 1860px;
  overflow: hidden;
  background:
    linear-gradient(90deg, transparent 79px, #dfdfdf 79px) 0 0 / 80px 24px,
    linear-gradient(transparent 23px, #dfdfdf 23px) 0 0 / 80px 24px,
    #fff;
`;

/* hides the lines round the merged cells beside the cards */
const Blank = styled.div`
  position: absolute;
  left: 1279px;
  top: 72px;
  width: 81px;
  height: 23px;
  background: #fff;
  box-shadow: 0 -1px #fff;

  &::after {
    content: "";
    position: absolute;
    left: 1px;
    top: 0;
    width: 79px;
    height: 47px;
    background: #fff;
  }
`;

const RedEdge = styled.div`
  position: absolute;
  left: 771px;
  top: 0;
  width: 664px;
  height: 2px;
  border: solid #c00000;
  border-width: 0 1px 1px;
`;

const Selection = styled.div`
  position: absolute;
  left: 1198px;
  top: 118px;
  width: 83px;
  height: 27px;
  border: 2px solid #1d6f42;

  &::after {
    content: "";
    position: absolute;
    right: -4px;
    bottom: -4px;
    width: 6px;
    height: 6px;
    border: solid #fff;
    border-width: 1px 0 0 1px;
    background: #1d6f42;
  }
`;

const Card = styled.div`
  position: absolute;
  left: ${({ x }) => x}px;
  top: ${({ y }) => y}px;
  width: 600px;
  height: 360px;
  border: 1px solid #d4d4d4;
  border-radius: 17px;
  background: #fff;
  box-shadow: ${({ $light, $strong }) => ($light ? "none" : $strong ? "3px 1px 4px #999" : "3px 2px 5px #888")};

  > svg {
    display: block;
    width: 600px;
    height: 360px;
    margin: -1px;
    overflow: visible;
    font-family: Lato, sans-serif;
  }

  text {
    text-shadow: 1px 2px 2px rgba(0, 0, 0, 0.2);
  }

  g[font-weight] text {
    text-shadow: none;
  }
`;

const PlainText = styled.g`
  text {
    text-shadow: none;
  }
`;

const VScroll = styled.div`
  width: 21px;
  display: flex;
  flex-direction: column;
  align-items: center;
  margin: -24px 0 0 3px;
  padding-top: 6px;
  border-radius: 10px;
  background: #151515;
`;

const VThumb = styled.div`
  width: 11px;
  height: 197px;
  margin: 140px 0 291px;
  border-radius: 5px;
  background: #999;
`;

const TabBar = styled.section`
  height: 41px;
  display: flex;
  align-items: center;
  border: solid #3d3d3d;
  border-width: 1px 0;
  font-size: 16.4px;
`;

const TabArrows = styled.div`
  width: 137px;
  display: flex;
  gap: 33px;
  padding: 0 0 2px 31px;
`;

const Tab = styled.div`
  width: ${({ $w }) => $w}px;
  height: 24px;
  border-right: 1px solid #555;
  border-left: ${({ $first }) => ($first ? "1px solid #555" : "none")};
  line-height: 23px;
  text-align: center;
  white-space: nowrap;
`;

const ActiveTab = styled.div`
  width: 108px;
  height: 35px;
  align-self: flex-start;
  margin: -1px 4px 0 5px;
  padding-top: 4px;
  border-radius: 0 0 5px 5px;
  background: #fff;
  color: #333;
  font-weight: 600;
  font-size: 16.4px;
  text-align: center;

  > span {
    display: inline-block;
    height: 28px;
    border-bottom: 2px solid #107c41;
    line-height: 26px;
  }
`;

const AddTab = styled.div`
  width: 634px;
  display: flex;
  padding: 0 0 2px 53px;
`;

const HScroll = styled.div`
  width: 500px;
  height: 21px;
  display: flex;
  align-items: center;
  gap: 7px;
  margin: 0 0 2px 8px;
  padding-left: 5px;
  border-radius: 10px;
  background: #151515;
`;

const HThumb = styled.div`
  flex: 1;
  height: 11px;
  border-radius: 5px;
  background: #999;
`;

const StatusBar = styled.footer`
  height: 26px;
  display: flex;
  align-items: center;
  padding-left: 14px;
  background: #131313;
  color: #eee;
  font-size: 12.5px;

  > span:first-child {
    width: 62px;
  }

  > b {
    margin-left: 3px;
    letter-spacing: -0.07px;
  }
`;

const ViewButtons = styled.div`
  display: flex;
  margin: 0 7px 0 auto;
`;

const ViewButton = styled.div`
  width: 50px;
  height: 26px;
  display: grid;
  place-items: center;
  background: ${({ $on }) => ($on ? "#292929" : "none")};
`;

const Percent = styled.div`
  width: 30px;
  margin: 0 12px 0 16px;
`;

const TaskRow = styled.footer`
  height: 50px;
  display: flex;
  background: linear-gradient(90deg, #263c33, #2f453d 30%, #2b4139);
`;

const StartButton = styled.div`
  width: 60px;
  display: grid;
  place-items: center;
`;

const TaskSearch = styled.div`
  width: 360px;
  display: flex;
  align-items: center;
  padding-left: 14px;
  border: 1px solid #57787a;
  background: #335a5b;
  color: #d5e0e0;
  font-size: 17.7px;

  > span {
    width: 220px;
    margin-left: 13px;
  }
`;

const Pinned = styled.div`
  width: ${({ $w }) => $w}px;
  display: grid;
  place-items: center;
`;

const Running = styled.div`
  width: ${({ $w }) => $w}px;
  display: flex;
  align-items: center;
  gap: ${({ $gap = 4 }) => $gap}px;
  margin-left: ${({ $before = 0 }) => $before}px;
  padding: 3px 0 0 ${({ $active }) => ($active ? 14 : 8)}px;
  border-bottom: 3px solid #8fe3e6;
  background: ${({ $active }) => ($active ? "#12787a" : "none")};
  font-size: 14.3px;
  white-space: nowrap;
`;

const ArabicTitle = styled.span`
  font-family: "DejaVu Sans", sans-serif;
  font-size: 14.7px;
`;

const FacebookBadge = styled.div`
  width: 30px;
  height: 30px;
  display: grid;
  place-items: end center;
  border-radius: 50%;
  background: #0d6ff0;
`;

const WhatsAppSlot = styled.div`
  position: relative;
  display: flex;
  margin-right: -8px;
`;

const CountBadge = styled.div`
  position: absolute;
  right: ${({ $big }) => ($big ? -10 : -2)}px;
  bottom: ${({ $big }) => ($big ? -9 : -5)}px;
  width: 20px;
  height: 20px;
  border: 1px solid #6f9a9a;
  border-radius: 50%;
  background: #0f6c70;
  font-weight: 600;
  font-size: 14px;
  line-height: 18px;
  text-align: center;
`;

const Tray = styled.div`
  display: flex;
  align-items: center;
  gap: 11px;
  margin-left: auto;
`;

const BlueTooth = styled.div`
  width: 16px;
  height: 21px;
  display: grid;
  place-items: center;
  border-radius: 6px;
  background: #0a70ea;
`;

const Lang = styled.span`
  width: 30px;
  margin-left: 5px;
  font-size: 14px;
`;

const Clock = styled.div`
  width: 76px;
  display: flex;
  flex-direction: column;
  align-items: center;
  font-size: 13.5px;
  line-height: 23px;
`;

const Alerts = styled.div`
  position: relative;
  display: flex;
  margin-left: 8px;
`;

const DesktopEdge = styled.div`
  width: 6px;
  height: 50px;
  margin-left: 14px;
  border-left: 1px solid #7c8a86;
`;

const ToastBox = styled.aside`
  position: absolute;
  left: 1445px;
  top: 850px;
  width: 455px;
  height: 164px;
  padding: 24px 24px 0 20px;
  background: linear-gradient(#328c90, #2b8388 50%, #1d7379 85%);
`;

const ToastHead = styled.div`
  display: flex;
  align-items: center;
  gap: 10px;
  height: 20px;

  > svg:last-child {
    margin: -2px 5px 0 auto;
  }
`;

const ToastBody = styled.div`
  display: flex;
  gap: 19px;
  margin-top: 20px;
  font-size: 17.6px;
  line-height: 25px;

  > svg {
    height: 50px;
    margin-top: 11px;
  }

  strong {
    font-weight: 600;
    font-size: 17.3px;
  }

  p {
    margin: 0;
    color: #a3ced0;
  }
`;

const Watermark = styled.div`
  position: absolute;
  left: 840px;
  top: 946px;
  opacity: 0.6;

  svg {
    overflow: visible;
  }

  text {
    fill: #a0a0a0;
  }
`;
